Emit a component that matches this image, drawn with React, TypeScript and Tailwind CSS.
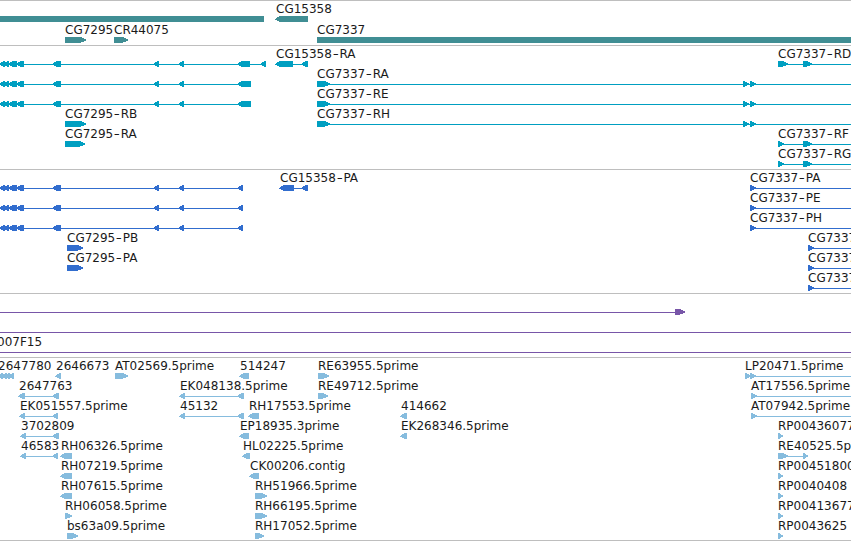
type Dir = "left" | "right" | "none";

interface Feature {
  label?: string;
  dir: Dir;
  line?: [number, number];
  exons?: [number, number][];
  labelX?: number;
}

interface Track {
  name: string;
  color: string;
  compact?: boolean;
  pad: string;
  rows: Feature[][];
}

const WIDTH = 851;

const upstream: [number, number][] = [
  [0, 5],
  [4, 9],
  [9, 17],
  [17, 24],
  [53, 61],
  [154, 159],
  [179, 184],
];

const left = (label: string, ...exons: [number, number][]): Feature => ({ label, dir: "left", exons });
const right = (label: string, ...exons: [number, number][]): Feature => ({ label, dir: "right", exons });
const open = (label: string, ...exons: [number, number][]): Feature => ({
  label,
  dir: "right",
  exons,
  line: [exons[0][0], WIDTH],
});
const chain = (start: number, end: number): Feature => ({
  dir: "left",
  line: [0, end],
  exons: [...upstream, [start, end]],
});

const tracks: Track[] = [
  {
    name: "genes",
    color: "#408e94",
    compact: true,
    pad: "pb-[2px]",
    rows: [
      [{ dir: "none", exons: [[0, 264]] }, left("CG15358", [276, 308])],
      [
        right("CG7295", [65, 86]),
        right("CR44075", [114, 128]),
        { label: "CG7337", dir: "none", exons: [[317, WIDTH]] },
      ],
    ],
  },
  {
    name: "transcripts",
    color: "#009fc1",
    pad: "pb-[3px]",
    rows: [
      [
        { dir: "left", line: [0, 266], exons: [...upstream, [238, 250], [261, 266]] },
        left("CG15358-RA", [276, 293], [302, 308]),
        open("CG7337-RD", [778, 788], [803, 812]),
      ],
      [chain(238, 251), open("CG7337-RA", [317, 330], [743, 749], [750, 756])],
      [chain(238, 251), open("CG7337-RE", [317, 330], [743, 749], [750, 756])],
      [right("CG7295-RB", [65, 86]), open("CG7337-RH", [317, 330], [743, 749], [750, 756])],
      [right("CG7295-RA", [65, 85]), open("CG7337-RF", [778, 784], [803, 812])],
      [open("CG7337-RG", [778, 784], [803, 812])],
    ],
  },
  {
    name: "proteins",
    color: "#316dce",
    pad: "pb-[3px]",
    rows: [
      [chain(238, 243), left("CG15358-PA", [280, 294], [302, 308]), open("CG7337-PA", [750, 756])],
      [chain(238, 243), open("CG7337-PE", [750, 756])],
      [chain(238, 243), open("CG7337-PH", [750, 756])],
      [right("CG7295-PB", [67, 83]), open("CG7337-PD", [808, 814])],
      [right("CG7295-PA", [67, 83]), open("CG7337-PF", [808, 814])],
      [open("CG7337-PG", [808, 814])],
    ],
  },
  {
    name: "clones",
    color: "#7856a8",
    pad: "pb-[3px]",
    rows: [
      [{ dir: "right", line: [0, 675], exons: [[675, 685]] }],
      [{ dir: "none", line: [0, WIDTH] }],
      [{ label: "007F15", labelX: -3, dir: "none", line: [0, WIDTH] }],
    ],
  },
  {
    name: "ests",
    color: "#86bcde",
    pad: "pb-[2px]",
    rows: [
      [
        { ...left("2647780", [-2, 3], [2, 7], [5, 10], [9, 14]), labelX: -2 },
        left("2646673", [56, 61]),
        right("AT02569.5prime", [115, 128]),
        left("514247", [240, 249]),
        right("RE63955.5prime", [318, 329]),
        open("LP20471.5prime", [745, 751], [750, 756]),
      ],
      [
        left("2647763", [19, 25], [53, 59]),
        left("EK048138.5prime", [180, 185], [238, 244]),
        right("RE49712.5prime", [318, 328]),
        open("AT17556.5prime", [751, 757]),
      ],
      [
        left("EK051557.5prime", [20, 25], [53, 58]),
        left("45132", [180, 185], [238, 244]),
        left("RH17553.5prime", [249, 259]),
        left("414662", [401, 407]),
        open("AT07942.5prime", [751, 757]),
      ],
      [
        left("3702809", [21, 26], [53, 59]),
        left("EP18935.3prime", [240, 249]),
        left("EK268346.5prime", [401, 407]),
        right("RP00436077", [778, 783]),
      ],
      [
        left("46583", [21, 26], [53, 58]),
        left("RH06326.5prime", [61, 72]),
        left("HL02225.5prime", [243, 250]),
        right("RE40525.5prime", [778, 788], [803, 808]),
      ],
      [
        left("RH07219.5prime", [61, 72]),
        left("CK00206.contig", [250, 259]),
        right("RP00451800", [778, 783]),
      ],
      [
        left("RH07615.5prime", [61, 72]),
        right("RH51966.5prime", [255, 267]),
        right("RP0040408", [778, 783]),
      ],
      [
        right("RH06058.5prime", [65, 72]),
        right("RH66195.5prime", [255, 267]),
        right("RP00413677", [778, 783]),
      ],
      [
        right("bs63a09.5prime", [67, 78]),
        right("RH17052.5prime", [255, 264]),
        right("RP0043625", [778, 783]),
      ],
    ],
  },
];

// How far each pixel row of the arrow head is cut back from the tip.
const insets: Record<Dir, number[]> = {
  left: [3, 1, 0, -1, 1, 3],
  right: [4, 2, 0, 0, 2, 5],
  none: [0, 0, 0, 0, 0, 0],
};

function exonPath([a, b]: [number, number], dir: Dir) {
  return insets[dir]
    .map((inset, y) => {
      const cut = Math.min(inset, Math.max(b - a - 2, 0));
      const start = dir === "left" ? a + cut : a;
      return `M${start} ${y}h${b - a - cut}v1h${cut - (b - a)}z`;
    })
    .join("");
}

function Glyph({ feature }: { feature: Feature }) {
  const exons = feature.exons ?? [];
  const line = feature.line ?? (exons.length > 1 ? [exons[0][0], exons[exons.length - 1][1]] : null);
  return (
    <g>
      {line && <rect x={line[0]} y={3} width={line[1] - line[0]} height={1} />}
      {exons.map((exon, i) => (
        <path key={i} d={exonPath(exon, feature.dir)} />
      ))}
    </g>
  );
}

function Label({ text, x }: { text: string; x: number }) {
  const [name, suffix] = text.split("-");
  return (
    <span
      className="absolute top-0 text-[12px] leading-4 whitespace-pre text-[#1a1a1a]"
      style={{ left: x }}
    >
      {name}
      {suffix && <span className="inline-block scale-x-140 px-[1.6px]">-</span>}
      {suffix}
    </span>
  );
}

function Row({ features, compact }: { features: Feature[]; compact?: boolean }) {
  return (
    <div className={compact ? "relative h-[21px] pt-[15px]" : "relative h-5 pt-[15px]"}>
      {features.map(
        (f, i) => f.label && <Label key={i} text={f.label} x={f.labelX ?? f.exons?.[0][0] ?? 0} />
      )}
      <svg className="block h-1.5 w-full" viewBox="0 0 851 6" fill="currentColor" shapeRendering="crispEdges">
        {features.map((f, i) => (
          <Glyph key={i} feature={f} />
        ))}
      </svg>
    </div>
  );
}

export default function App() {
  return (
    <main className="flex h-[541px] w-[851px] flex-col overflow-hidden border-b border-[#bebebe] bg-white font-['DejaVu_Sans',sans-serif]">
      {tracks.map((track) => (
        <section
          key={track.name}
          className={`shrink-0 border-t border-[#bebebe] ${track.pad}`}
          style={{ color: track.color }}
        >
          {track.rows.map((row, i) => (
            <Row key={i} features={row} compact={track.compact} />
          ))}
        </section>
      ))}
    </main>
  );
}
